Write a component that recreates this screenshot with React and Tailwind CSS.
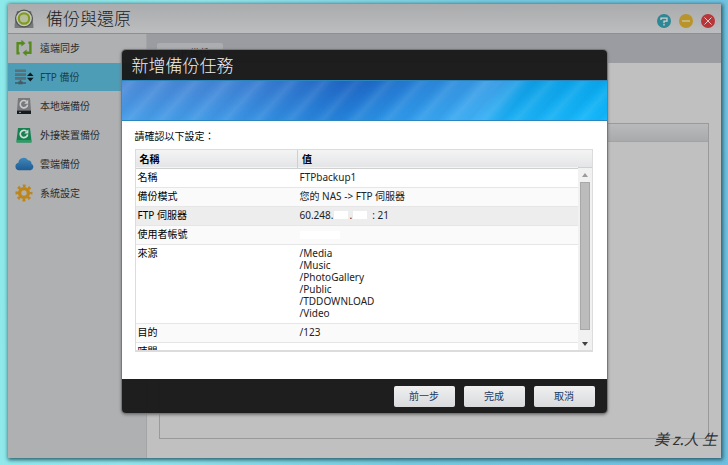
import { useState } from 'react';

const rows = [
    { label: '名稱', value: 'FTPbackup1', bg: 'bg-white' },
    { label: '備份模式', value: '您的 NAS -> FTP 伺服器', bg: 'bg-[#fafafa]' },
    { label: 'FTP 伺服器', value: <MaskedHost />, bg: 'bg-[#ededed]' },
    { label: '使用者帳號', value: <Mask className="w-10" />, bg: 'bg-[#fafafa]' },
    {
        label: '來源',
        value: ['/Media', '/Music', '/PhotoGallery', '/Public', '/TDDOWNLOAD', '/Video'].map((path) => (
            <div key={path}>{path}</div>
        )),
        bg: 'bg-white',
    },
    { label: '目的', value: '/123', bg: 'bg-[#fafafa]' },
    { label: '時間', value: '', bg: 'bg-white' },
];

const menu = [
    { id: 'sync', label: '遠端同步', Icon: SyncIcon },
    { id: 'ftp', label: 'FTP 備份', Icon: FtpIcon },
    { id: 'local', label: '本地端備份', Icon: DiskIcon },
    { id: 'external', label: '外接裝置備份', Icon: ExternalIcon },
    { id: 'cloud', label: '雲端備份', Icon: CloudIcon },
    { id: 'settings', label: '系統設定', Icon: GearIcon },
];

function Mask({ className }) {
    return <span className={`inline-block h-2 bg-white align-middle ${className}`} />;
}

function MaskedHost() {
    return (
        <span className="flex items-center gap-px">
            60.248.
            <Mask className="w-3.5" />
            .
            <Mask className="w-3.5" />
            <span className="pl-1">: 21</span>
        </span>
    );
}

function SyncIcon() {
    return (
        <svg viewBox="0 0 18 18" className="size-[18px]" fill="none" stroke="#568a1c" strokeWidth="2.4">
            <path d="M4.6 14.4H2.6V4.2H7M13.4 3.6h2v10.2H11" />
            <path d="M6.4 .8 10.4 4.2 6.4 7.600ZM11.6 10.400 7.600 13.800l4 3.400Z" fill="#568a1c" stroke="none" />
        </svg>
    );
}

function FtpIcon() {
    return (
        <svg viewBox="0 0 19 16" className="h-4 w-[19px]">
            <path d="M0 .5h11v2.6H0zM0 4.300h11v2.600H0zM0 8.100h11v2.600H0z" fill="#54717c" />
            <path d="M5.500 10.700v2M0 14h11" stroke="#425b65" strokeWidth="1.4" />
            <rect x="3.500" y="12.300" width="4" height="3" fill="#425b65" />
            <path d="M12 7 15.300 3.400 18.600 7ZM12 8.800l3.300 3.600 3.300-3.600Z" fill="#101b20" />
        </svg>
    );
}

function DiskIcon() {
    return (
        <svg viewBox="0 0 16 18" className="h-[18px] w-4">
            <path d="M2 1h12l1 12.500H1Z" fill="#77797c" />
            <path d="M1 13.5h14V17H1z" fill="#17191b" />
            <path d="M11.6 7.6A3.7 3.7 0 1 1 10.4 4.4" fill="none" stroke="#c9cbcd" strokeWidth="1.6" />
            <path d="M12.2 2.8v4H8.2Z" fill="#c9cbcd" />
            <path d="M3 15.4h2" stroke="#8ca0b0" />
        </svg>
    );
}

function ExternalIcon() {
    return (
        <svg viewBox="0 0 16 16" className="size-4">
            <path d="M2 1h12l1.400 12v2.400H.6V13Z" fill="#158050" />
            <path d="M.6 13h14.8v2.4H.6z" fill="#2e9c66" />
            <path d="M11.6 7.4A3.7 3.7 0 1 1 10.4 4.2" fill="none" stroke="#d2dfd8" strokeWidth="1.7" />
            <path d="M12.4 2.4v4.2H8.2Z" fill="#d2dfd8" />
        </svg>
    );
}

function CloudIcon() {
    return (
        <svg viewBox="0 0 19 14" className="h-3.5 w-[19px]">
            <defs>
                <linearGradient id="cloud" x1="0" y1="0" x2="0" y2="1">
                    <stop offset="0" stopColor="#3d87bb" />
                    <stop offset="1" stopColor="#205c93" />
                </linearGradient>
            </defs>
            <path
                d="M4 13.200A3.800 3.800 0 0 1 3.400 5.700A5.200 5.200 0 0 1 13 3.200A3.600 3.600 0 0 1 16.500 6.800A3.400 3.400 0 0 1 15.500 13.200Z"
                fill="url(#cloud)"
            />
        </svg>
    );
}

function GearIcon() {
    return (
        <svg viewBox="0 0 18 18" className="size-[18px]" stroke="#bd861c" fill="none">
            <circle cx="9" cy="9" r="4.400" strokeWidth="3.400" />
            <circle cx="9" cy="9" r="7" strokeWidth="3" strokeDasharray="2.75 2.75" strokeDashoffset="1.375" />
        </svg>
    );
}

function AppIcon() {
    return (
        <svg viewBox="0 0 20 20" className="size-5">
            <path d="M3 2h14l2.400 14v3H.6v-3Z" fill="#77787b" />
            <circle cx="10" cy="9.500" r="9" fill="#4e5052" />
            <circle cx="10" cy="9.500" r="7.800" fill="#c5c8bd" />
            <circle cx="10" cy="9.500" r="5.200" fill="#b6bd9c" stroke="#809c20" strokeWidth="2.200" />
        </svg>
    );
}

function WindowButtons() {
    const base = 'flex size-3.5 items-center justify-center rounded-full';
    const svg = { viewBox: '0 0 14 14', className: 'size-3.5', fill: 'none', stroke: '#d3d3cf', strokeWidth: 1 };
    return (
        <div className="flex gap-2">
            <button aria-label="說明" className={`${base} bg-[#2e8794]`}>
                <svg {...svg} strokeWidth={1.3}>
                    <path d="M4 6V4.200h6v3H7v2M7 10v1.400" />
                </svg>
            </button>
            <button aria-label="最小化" className={`${base} bg-[#b8942b]`}>
                <svg {...svg}>
                    <path d="M3 7h8" />
                </svg>
            </button>
            <button aria-label="關閉" className={`${base} bg-[#b83538]`}>
                <svg {...svg}>
                    <path d="m3.500 3.500 7 7M10.500 3.500l-7 7" />
                </svg>
            </button>
        </div>
    );
}

function Sidebar({ active, onSelect }) {
    return (
        <nav className="w-[139px] shrink-0 border-r border-[#a3a4a6] bg-[#aeb0b2]">
            {menu.map(({ id, label, Icon }) => (
                <button
                    key={id}
                    onClick={() => onSelect(id)}
                    className={`mb-px flex h-7 w-full items-center gap-1.5 pl-1.5 text-left ${
                        active === id ? 'bg-[#4e9db6] text-[#17414f]' : 'text-[#2b2c2d]'
                    }`}
                >
                    <span className="flex w-5 justify-center">
                        <Icon />
                    </span>
                    {label}
                </button>
            ))}
        </nav>
    );
}

function ScrollBar() {
    return (
        <div className="flex w-3.5 shrink-0 flex-col">
            <div className="h-[18px] shrink-0 border-b border-[#d0d0d0] bg-linear-to-b from-[#f4f4f4] to-[#e4e5e7]" />
            <div className="flex flex-1 flex-col items-center bg-[#f1f1f1]">
                <div className="flex h-3.5 items-center">
                    <svg viewBox="0 0 6 4" className="h-1 w-1.5" fill="#9b9b9b">
                        <path d="M0 4 3 0l3 4Z" />
                    </svg>
                </div>
                <div className="w-2.5 flex-1 border border-[#a8a8a8] bg-[#bcbcbc]" />
                <div className="flex h-5 items-center pt-2">
                    <svg viewBox="0 0 6 4" className="h-1 w-1.5" fill="#404040">
                        <path d="M0 0h6L3 4Z" />
                    </svg>
                </div>
            </div>
        </div>
    );
}

function SettingsTable() {
    return (
        <div className="flex h-[203px] overflow-hidden border border-b-2 border-[#dcdcdc]">
            <div className="flex-1 overflow-hidden">
                <table className="w-full table-fixed border-collapse text-left leading-3 text-[#222]">
                    <thead>
                        <tr className="h-[18px] border-b border-[#d0d0d0] bg-linear-to-b from-[#f4f4f4] to-[#e4e5e7] text-black">
                            <th className="w-[162px] border-r border-[#cfd0d2] px-1 font-bold">名稱</th>
                            <th className="px-1 font-bold">值</th>
                        </tr>
                    </thead>
                    <tbody>
                        {rows.map((row) => (
                            <tr key={row.label} className={`border-b border-[#e6e6e6] align-top ${row.bg}`}>
                                <td className="px-0.5 pt-0.5 pb-1 text-black">{row.label}</td>
                                <td className="px-0.5 pt-0.5 pb-1">{row.value}</td>
                            </tr>
                        ))}
                    </tbody>
                </table>
            </div>
            <ScrollBar />
        </div>
    );
}

function DialogButton({ children }) {
    return (
        <button className="h-[21px] w-[61px] rounded-xs bg-linear-to-b from-[#f0f0f1] to-[#d9dadc] text-[#173a66]">
            {children}
        </button>
    );
}

function BackupDialog() {
    return (
        <div
            role="dialog"
            aria-labelledby="dialog-title"
            className="w-[485px] max-w-full overflow-hidden rounded-sm shadow-[0_0_0_1px_#77787a,0_1px_3px_1px_#777]"
        >
            <h2
                id="dialog-title"
                className="flex h-[30px] items-center bg-[#191919]/97 pt-0.5 pl-2.5 text-[17px] font-light text-[#f0f0f0]"
            >
                新增備份任務
            </h2>
            <div className="h-[41px] border-y border-[#2a86bd] bg-[repeating-linear-gradient(132deg,#ffffff00_0px,#ffffff14_7px,#ffffff00_14px,#0040a00c_20px,#ffffff00_24px),linear-gradient(to_bottom,#00309018,#30b8ff50),linear-gradient(125deg,#5794de_0%,#4a8cdb_22%,#1f68c6_46%,#2f8cdf_60%,#48aef0_74%,#12aaec_80%,#06b8fa_100%)]" />
            <div className="h-[258px] bg-white pt-[9px] pr-3.5 pl-[13px]">
                <p className="mb-1 h-[15px] leading-3 text-black">請確認以下設定：</p>
                <SettingsTable />
            </div>
            <div className="flex h-[34px] items-center justify-end gap-[9px] bg-[#1b1b1b]/98 pr-3">
                <DialogButton>前一步</DialogButton>
                <DialogButton>完成</DialogButton>
                <DialogButton>取消</DialogButton>
            </div>
        </div>
    );
}

export default function App() {
    const [active, setActive] = useState('ftp');

    return (
        <div className="relative flex min-h-screen bg-[linear-gradient(100deg,#8ceaea_0%,#96e6ea_25%,#79cce0_60%,#70bfe0_100%)] pt-1 pr-[7px] pb-[7px] pl-2 font-['Noto_Sans','Noto_Sans_CJK_TC',sans-serif] text-[10px]">
            <div className="flex flex-1 flex-col bg-[#c0c0c0] shadow-[1px_1px_4px_1px_#26606f]">
                <header className="flex h-[30px] items-center border-b border-[#8e8f91] bg-linear-to-b from-[#aaabad] to-[#bcbdbf] px-1.5">
                    <AppIcon />
                    <h1 className="flex-1 pl-3 text-[17px] font-light text-[#202122]">備份與還原</h1>
                    <div className="pt-1">
                        <WindowButtons />
                    </div>
                </header>
                <div className="flex flex-1">
                    <Sidebar active={active} onSelect={setActive} />
                    <main className="relative flex flex-1 flex-col">
                        <div className="flex h-[29px] items-end bg-[#9b9ca1] pl-2.5">
                            <button className="h-5 w-[66px] rounded-t-xs bg-[#acadb0] text-[#333]">FTP 備份</button>
                        </div>
                        <div className="mx-3 mt-[60px] mb-[19px] flex-1 border border-[#999a9c]">
                            <div className="h-[18px] border-b border-[#a2a3a5] bg-linear-to-b from-[#b9babb] to-[#a9aaac]" />
                        </div>
                        <span className="absolute right-1 bottom-2 font-['Noto_Sans_CJK_TC',sans-serif] text-[15px] text-[#303234] italic">
                            美 z.人 生
                        </span>
                    </main>
                </div>
            </div>
            <div className="absolute inset-0 flex items-center justify-center pb-0.5">
                <BackupDialog />
            </div>
        </div>
    );
}
